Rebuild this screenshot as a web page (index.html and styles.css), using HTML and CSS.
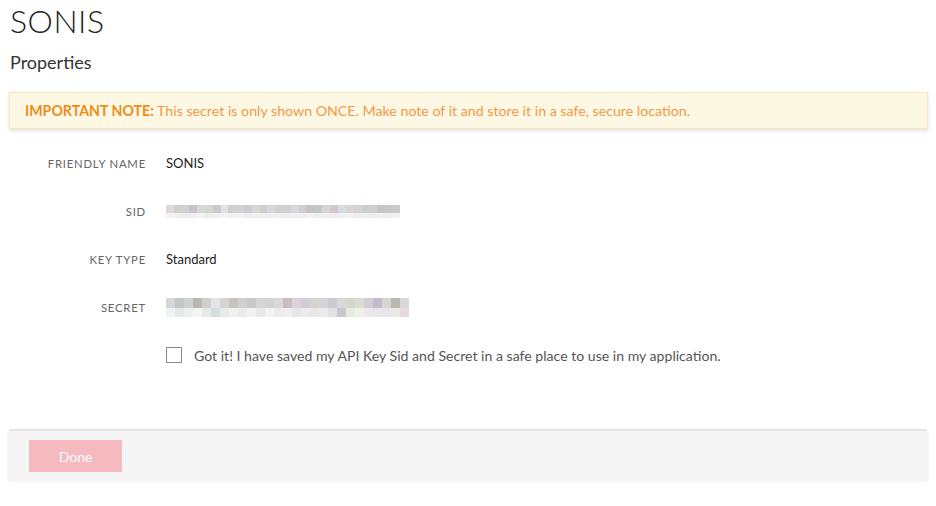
FILE: index.html
```html
<!DOCTYPE html>
<html>
<head>
<meta charset="utf-8">
<link rel="stylesheet" href="styles.css">
</head>
<body>
<div class="page">
  <h1 class="title">SONIS</h1>
  <h2 class="subtitle">Properties</h2>
  <div class="note"><strong>IMPORTANT NOTE:</strong> This secret is only shown ONCE. Make note of it and store it in a safe, secure location.</div>
  <dl class="props">
    <div class="row">
      <dt>Friendly Name</dt>
      <dd>SONIS</dd>
    </div>
    <div class="row">
      <dt>SID</dt>
      <dd>
        <div class="blur sid">
          <div class="px-row top">
            <span style="background:#e0d8d8"></span><span style="background:#cdd0cc"></span><span style="background:#d2d0d6"></span><span style="background:#c9c3cc"></span><span style="background:#d8d8d8"></span><span style="background:#d4d7d0"></span><span style="background:#cdc7cf"></span><span style="background:#e2e2e2"></span><span style="background:#d0d0d0"></span><span style="background:#d2d0d6"></span><span style="background:#d0cbd2"></span><span style="background:#d6d6d2"></span><span style="background:#cfcfca"></span><span style="background:#d6d6dc"></span><span style="background:#d2d2cc"></span><span style="background:#d1d1cf"></span><span style="background:#d8d8dc"></span><span style="background:#d1ccd2"></span><span style="background:#cbc4be"></span><span style="background:#c4c7c7"></span><span style="background:#d6d4d4"></span><span style="background:#d4c8cc"></span><span style="background:#d4dce4"></span><span style="background:#d8d6d4"></span><span style="background:#d8d0d8"></span><span style="background:#c8d0ce"></span><span style="background:#d0d0d0"></span><span style="background:#c8c4cc"></span><span style="background:#c6c8c8"></span><span style="background:#c8ccc8"></span>
          </div>
          <div class="px-row bottom">
            <span style="background:#f2f2f2"></span><span style="background:#eef0ee"></span><span style="background:#eeeeee"></span><span style="background:#f0eef0"></span><span style="background:#f2f2f2"></span><span style="background:#eaeeea"></span><span style="background:#f0f0f0"></span><span style="background:#f4f4f4"></span><span style="background:#f0f0ec"></span><span style="background:#f2f2f4"></span><span style="background:#eeeeee"></span><span style="background:#f0f0f0"></span><span style="background:#eeeeee"></span><span style="background:#f0f0f2"></span><span style="background:#f0f0f0"></span><span style="background:#eeeeee"></span><span style="background:#f0f0f0"></span><span style="background:#eeeef0"></span><span style="background:#f2f2f2"></span><span style="background:#eeeeee"></span><span style="background:#f0f0f0"></span><span style="background:#eeeeee"></span><span style="background:#f0f0f2"></span><span style="background:#f2f2f2"></span><span style="background:#eeeeee"></span><span style="background:#f0f0f0"></span><span style="background:#eeeeee"></span><span style="background:#f0f0f0"></span><span style="background:#eeeeee"></span><span style="background:#f2f2f2"></span>
          </div>
        </div>
      </dd>
    </div>
    <div class="row">
      <dt>Key Type</dt>
      <dd>Standard</dd>
    </div>
    <div class="row">
      <dt>Secret</dt>
      <dd>
        <div class="blur secret">
          <div class="px-row top">
            <span style="background:#d4d6d8"></span><span style="background:#c4c6c6"></span><span style="background:#cfd2d2"></span><span style="background:#bcb8b0"></span><span style="background:#cdd0cc"></span><span style="background:#e2e6e8"></span><span style="background:#d4d4d4"></span><span style="background:#c8c4bc"></span><span style="background:#d0d0d0"></span><span style="background:#c8c8c8"></span><span style="background:#d8d4d4"></span><span style="background:#d2d2d2"></span><span style="background:#d8d8d8"></span><span style="background:#c8bcbc"></span><span style="background:#dcd0dc"></span><span style="background:#d4ccd4"></span><span style="background:#d4d4d0"></span><span style="background:#d6d2d6"></span><span style="background:#ccccd0"></span><span style="background:#dad6dc"></span><span style="background:#d4d8c8"></span><span style="background:#dcdcd4"></span><span style="background:#d2ccd4"></span><span style="background:#c8b8cc"></span><span style="background:#d4d6d0"></span><span style="background:#b8b8b0"></span><span style="background:#d8d8d8"></span>
          </div>
          <div class="px-row bottom">
            <span style="background:#eef4f6"></span><span style="background:#e6e8ea"></span><span style="background:#eef0f0"></span><span style="background:#f4f4f0"></span><span style="background:#e4eaec"></span><span style="background:#d4dcdc"></span><span style="background:#e8eaea"></span><span style="background:#f0f0f0"></span><span style="background:#eaeaec"></span><span style="background:#f2f2f2"></span><span style="background:#e8e8e8"></span><span style="background:#f4f4f4"></span><span style="background:#ececec"></span><span style="background:#f0eef0"></span><span style="background:#e6e6ea"></span><span style="background:#eceaec"></span><span style="background:#e8e8e8"></span><span style="background:#ececec"></span><span style="background:#e2e2e4"></span><span style="background:#c8c8c8"></span><span style="background:#e6eae0"></span><span style="background:#f0f0ea"></span><span style="background:#eee8ee"></span><span style="background:#e8e8e8"></span><span style="background:#e6e6e8"></span><span style="background:#ece8e8"></span><span style="background:#e4dcdc"></span>
          </div>
        </div>
      </dd>
    </div>
  </dl>
  <label class="confirm">
    <span class="checkbox"></span>
    <span class="confirm-text">Got it! I have saved my API Key Sid and Secret in a safe place to use in my application.</span>
  </label>
  <div class="footer">
    <button class="btn-done" disabled>Done</button>
  </div>
</div>
</body>
</html>
```

FILE: styles.css
```css
* { box-sizing: border-box; }
html, body { margin: 0; padding: 0; background: #fff; }
body {
  font-family: Lato, "Open Sans", "Liberation Sans", sans-serif;
  color: #222;
}
.page {
  padding: 0 9px 0 9px;
  width: 937px;
}
.title {
  margin: 0;
  padding: 2px 0 0 1px;
  font-size: 32px;
  font-weight: 300;
  line-height: 38px;
  color: #222;
  letter-spacing: 0.5px;
}
.subtitle {
  margin: 10px 0 0 1px;
  font-size: 18px;
  font-weight: 400;
  line-height: 24px;
  color: #333;
}
.note {
  margin-top: 18px;
  width: 919px;
  height: 37px;
  background: #fdf8e3;
  border: 1px solid #f6e7bf;
  box-shadow: 0 2px 4px rgba(0,0,0,0.12);
  padding: 9px 15px 0 15px;
  font-size: 14.2px;
  line-height: 18px;
  color: #f09a4a;
}
.note strong { color: #ef8c1c; font-weight: 700; }
.props {
  margin: 10px 0 0 0;
  display: flex;
  flex-direction: column;
}
.row {
  display: flex;
  align-items: center;
  height: 48px;
}
.row dt {
  width: 137px;
  text-align: right;
  font-size: 11.3px;
  letter-spacing: 0.8px;
  text-transform: uppercase;
  color: #666;
}
.row dd {
  margin: 0 0 0 20px;
  font-size: 13px;
  color: #222;
}
.blur { display: flex; flex-direction: column; }
.px-row { display: flex; }
.px-row span { display: block; }
.sid .top span { height: 8px; }
.sid .bottom span { height: 5px; }
.sid .px-row span { width: 7.8px; }
.secret .top span { height: 10px; }
.secret .bottom span { height: 9px; }
.secret .px-row span { width: 9px; }
.confirm {
  display: flex;
  align-items: center;
  margin: 14px 0 0 157px;
  height: 20px;
}
.checkbox {
  width: 16px;
  height: 16px;
  border: 1px solid #8a8a8a;
  background: #fff;
}
.confirm-text {
  margin-left: 12px;
  font-size: 14.1px;
  color: #555;
}
.footer {
  margin-top: 64px;
  width: 918px;
  height: 53px;
  background: #f5f5f5;
  border-top: 2px solid #e6e6e6;
  box-shadow: 0 1px 3px rgba(0,0,0,0.1);
  padding: 9px 0 0 20px;
}
.btn-done {
  width: 93px;
  height: 32px;
  border: none;
  background: #f5b9c0;
  color: #fff;
  font-family: inherit;
  font-size: 14px;
  padding: 0;
}
```
